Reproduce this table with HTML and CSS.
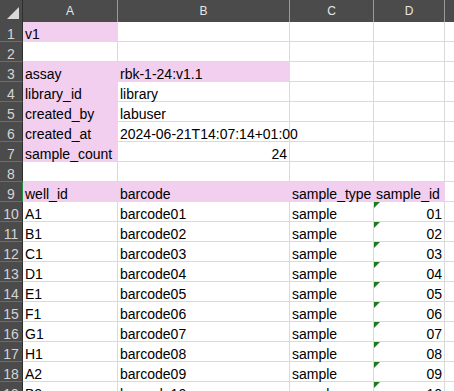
FILE: index.html
```html
<!DOCTYPE html>
<html>
<head>
<meta charset="utf-8">
<link rel="stylesheet" href="styles.css">
</head>
<body>
<div class="sheet">
  <div class="corner"><span class="tri"></span></div>
  <div class="ch">A</div><div class="ch">B</div><div class="ch">C</div><div class="ch">D</div><div class="ch last"></div>

  <div class="rh">1</div><div class="c pink">v1</div><div class="c"></div><div class="c"></div><div class="c"></div><div class="c e"></div>
  <div class="rh">2</div><div class="c"></div><div class="c"></div><div class="c"></div><div class="c"></div><div class="c e"></div>
  <div class="rh">3</div><div class="c pink">assay</div><div class="c pink">rbk-1-24:v1.1</div><div class="c"></div><div class="c"></div><div class="c e"></div>
  <div class="rh">4</div><div class="c pink">library_id</div><div class="c">library</div><div class="c"></div><div class="c"></div><div class="c e"></div>
  <div class="rh">5</div><div class="c pink">created_by</div><div class="c">labuser</div><div class="c"></div><div class="c"></div><div class="c e"></div>
  <div class="rh">6</div><div class="c pink">created_at</div><div class="c">2024-06-21T14:07:14+01:00</div><div class="c"></div><div class="c"></div><div class="c e"></div>
  <div class="rh">7</div><div class="c pink">sample_count</div><div class="c num">24</div><div class="c"></div><div class="c"></div><div class="c e"></div>
  <div class="rh">8</div><div class="c"></div><div class="c"></div><div class="c"></div><div class="c"></div><div class="c e"></div>
  <div class="rh sel">9</div><div class="c pink">well_id</div><div class="c pink">barcode</div><div class="c pink">sample_type</div><div class="c pink">sample_id</div><div class="c e"></div>
  <div class="rh">10</div><div class="c">A1</div><div class="c">barcode01</div><div class="c">sample</div><div class="c num flag">01</div><div class="c e"></div>
  <div class="rh">11</div><div class="c">B1</div><div class="c">barcode02</div><div class="c">sample</div><div class="c num flag">02</div><div class="c e"></div>
  <div class="rh">12</div><div class="c">C1</div><div class="c">barcode03</div><div class="c">sample</div><div class="c num flag">03</div><div class="c e"></div>
  <div class="rh">13</div><div class="c">D1</div><div class="c">barcode04</div><div class="c">sample</div><div class="c num flag">04</div><div class="c e"></div>
  <div class="rh">14</div><div class="c">E1</div><div class="c">barcode05</div><div class="c">sample</div><div class="c num flag">05</div><div class="c e"></div>
  <div class="rh">15</div><div class="c">F1</div><div class="c">barcode06</div><div class="c">sample</div><div class="c num flag">06</div><div class="c e"></div>
  <div class="rh">16</div><div class="c">G1</div><div class="c">barcode07</div><div class="c">sample</div><div class="c num flag">07</div><div class="c e"></div>
  <div class="rh">17</div><div class="c">H1</div><div class="c">barcode08</div><div class="c">sample</div><div class="c num flag">08</div><div class="c e"></div>
  <div class="rh">18</div><div class="c">A2</div><div class="c">barcode09</div><div class="c">sample</div><div class="c num flag">09</div><div class="c e"></div>
  <div class="rh">19</div><div class="c">B2</div><div class="c">barcode10</div><div class="c">sample</div><div class="c num flag">10</div><div class="c e"></div>
</div>
</body>
</html>
```

FILE: styles.css
```css
html, body {
  margin: 0;
  padding: 0;
  background: #ffffff;
  overflow: hidden;
  width: 454px;
  height: 391px;
}

.sheet {
  display: grid;
  grid-template-columns: 23px 95px 172px 84px 71px 1fr;
  grid-auto-rows: 20px;
  grid-template-rows: 22px;
  font-family: "Liberation Sans", Arial, sans-serif;
  font-size: 14px;
  color: #000;
}

.corner {
  position: relative;
  background: #4b4b4b;
  border-right: 1px solid #2e2e2e;
  box-sizing: border-box;
}

.tri {
  position: absolute;
  left: 7px;
  top: 7px;
  width: 12px;
  height: 12px;
  background: #d9d9d9;
  clip-path: polygon(100% 0, 100% 100%, 0 100%);
}

.ch {
  background: #4b4b4b;
  color: #e6e6e6;
  font-size: 12px;
  line-height: 21px;
  padding-top: 1px;
  text-align: center;
  box-sizing: border-box;
  border-right: 1px solid #9a9a9a;
}

.ch.last {
  border-right: none;
}

.rh {
  background: #4b4b4b;
  color: #d4d4d4;
  text-align: center;
  box-sizing: border-box;
  padding-top: 4px;
  line-height: 16px;
  border-bottom: 1px solid #6c6c6c;
  border-right: 1px solid #2e2e2e;
}

.rh.sel {
  border-right: 1px solid #1e8a3c;
}

.c {
  position: relative;
  box-sizing: border-box;
  border-right: 1px solid #dadada;
  border-bottom: 1px solid #dadada;
  padding: 4px 2px 0 2px;
  line-height: 16px;
  white-space: nowrap;
  overflow: visible;
}

.c.e {
  border-right: none;
}

.pink {
  background: #f2ceef;
  border-color: #f2ceef;
}

.num {
  text-align: right;
}

.flag::before {
  content: "";
  position: absolute;
  left: 0;
  top: 0;
  width: 6px;
  height: 6px;
  background: #1f7a1f;
  clip-path: polygon(0 0, 100% 0, 0 100%);
}
```
